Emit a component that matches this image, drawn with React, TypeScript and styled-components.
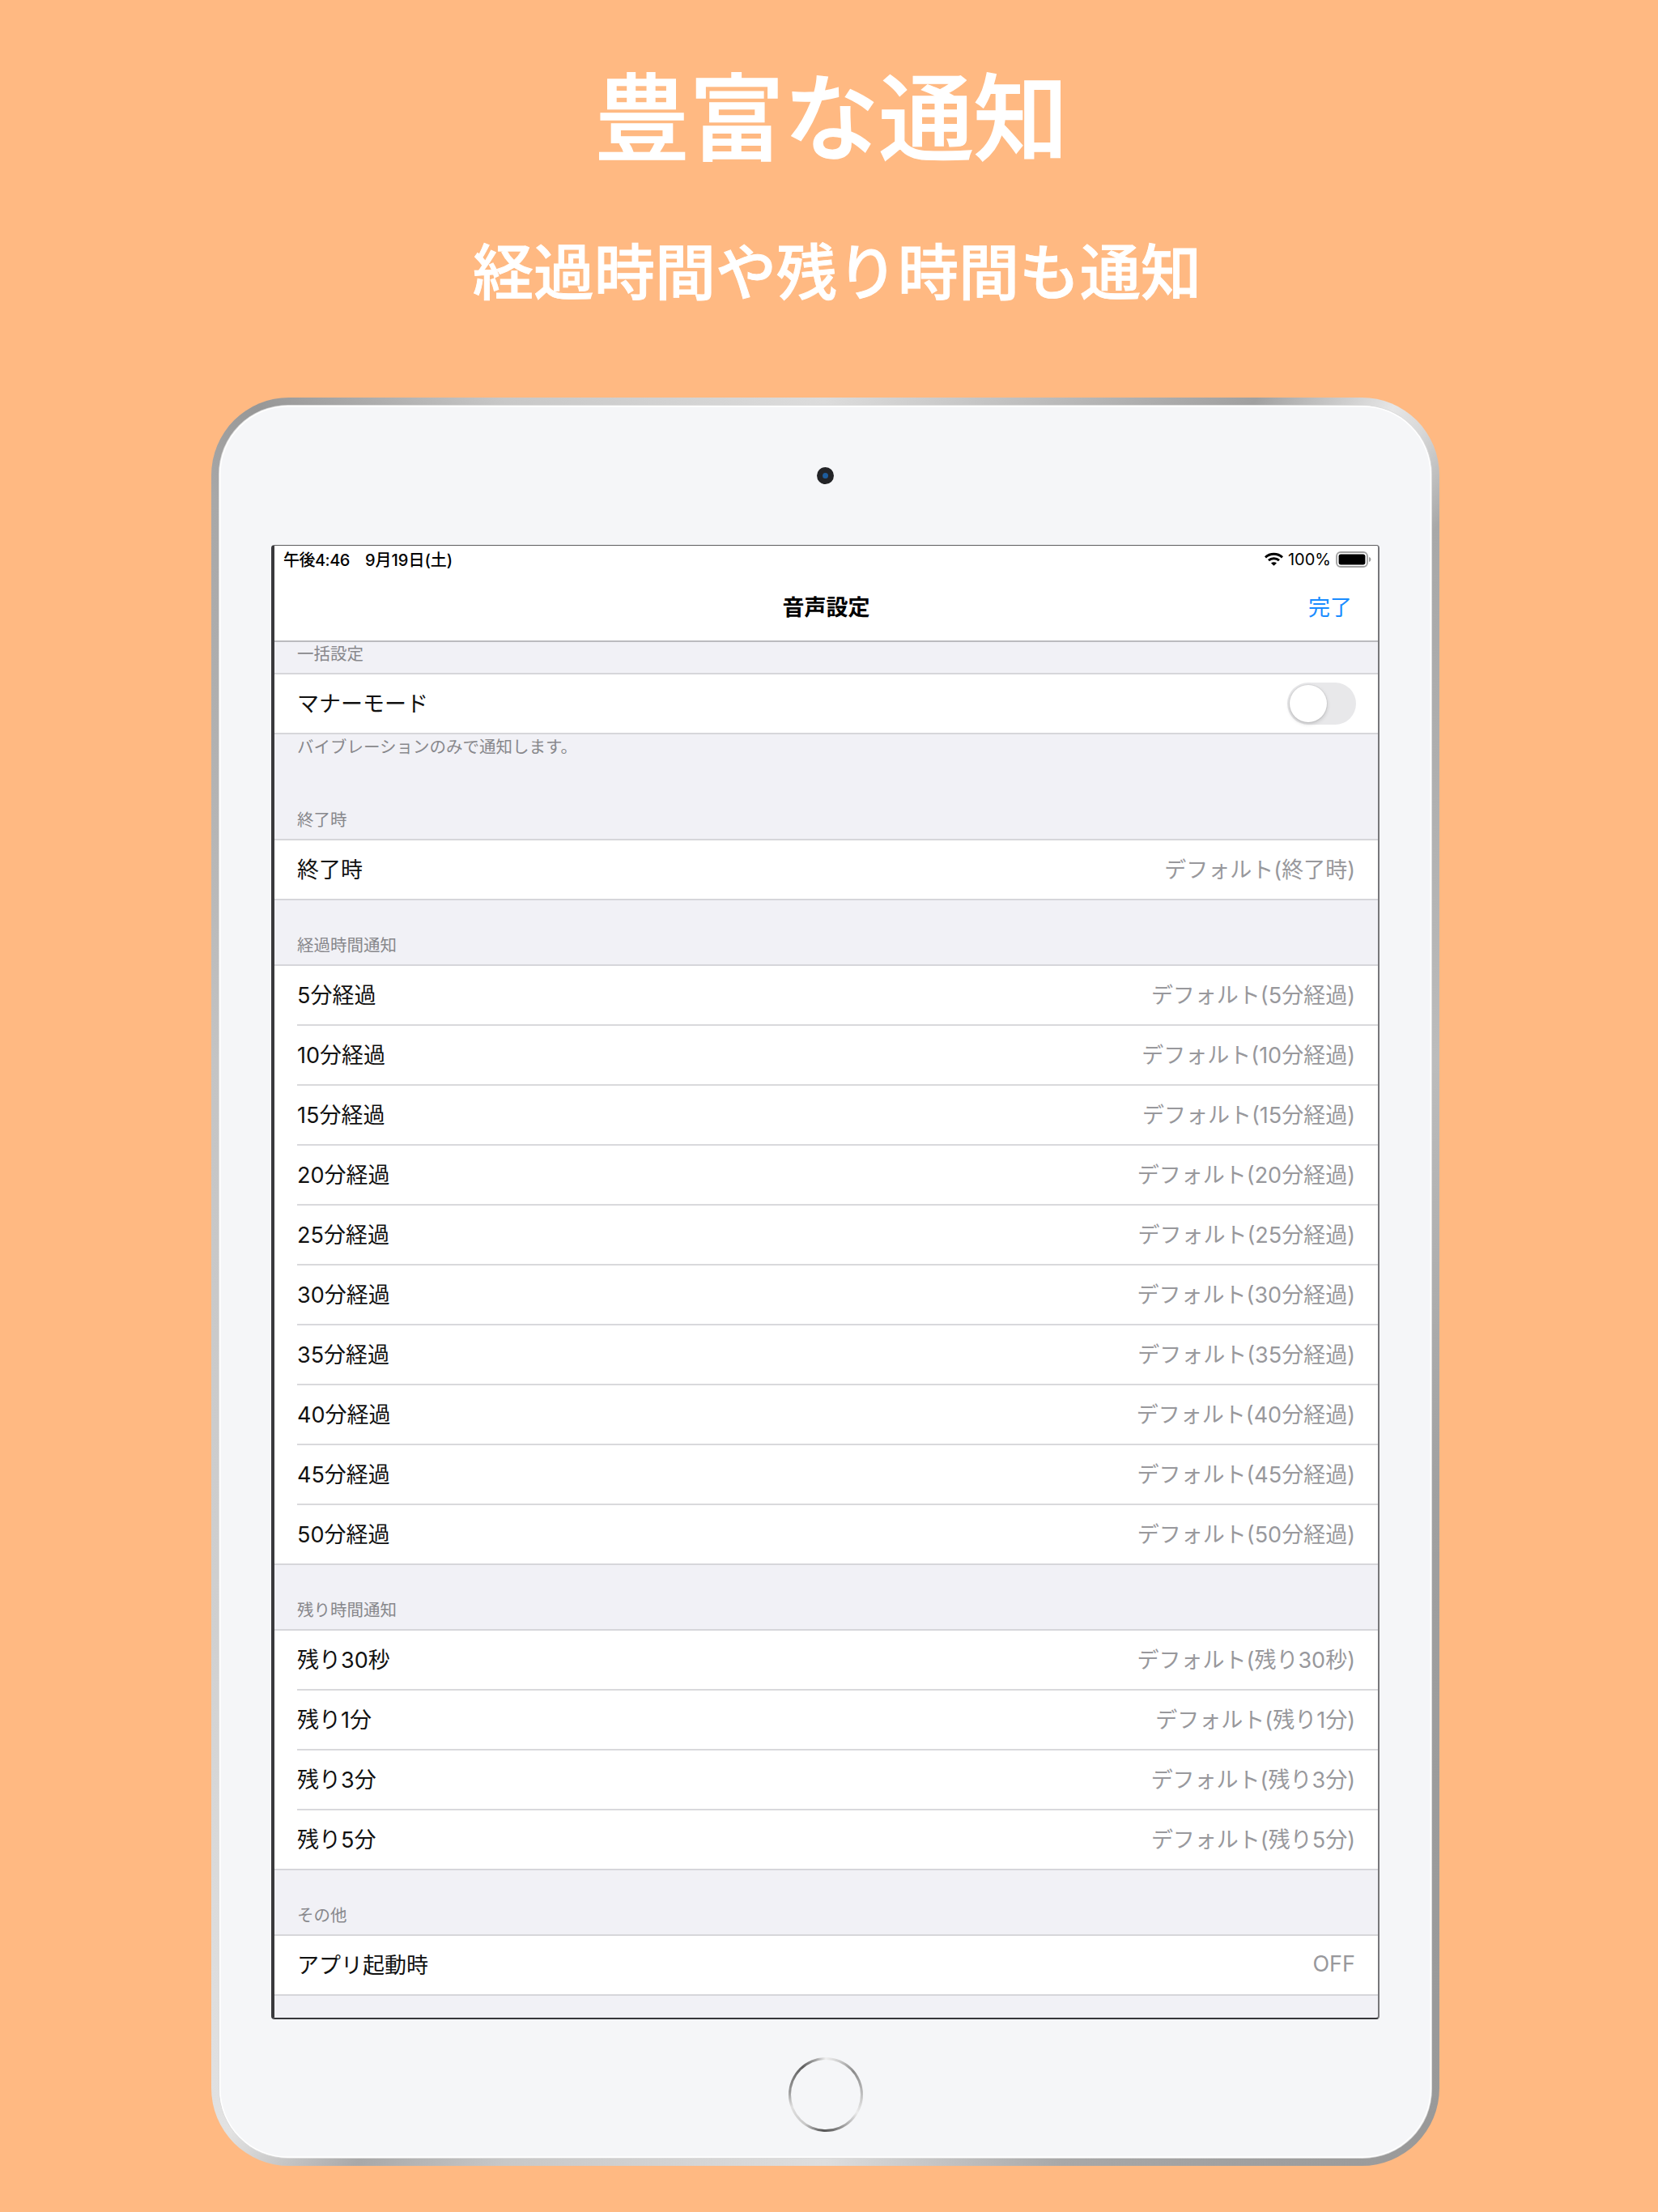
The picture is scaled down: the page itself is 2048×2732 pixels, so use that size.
import React from "react";
import styled, { createGlobalStyle } from "styled-components";

const GlobalStyle = createGlobalStyle`
  html, body {
    margin: 0;
    padding: 0;
    background: #ffb982;
  }
  * {
    box-sizing: border-box;
  }
`;

const JP = `Inter, "Noto Sans CJK JP", sans-serif`;

const Page = styled.div`
  width: 2048px;
  height: 2732px;
  padding: 88px 0 0 261px;
  background: #ffb982;
  font-family: ${JP};
  overflow: hidden;
`;

const Headline = styled.h1`
  width: 1532px;
  margin: 0;
  color: #fff;
  font-size: 117px;
  line-height: 117px;
  font-weight: 500;
  -webkit-text-stroke: 1.4px #fff;
  text-align: center;
`;

const SubHeadline = styled.h2`
  width: 1546px;
  margin: 94px 0 0;
  color: #fff;
  font-size: 75px;
  line-height: 75px;
  font-weight: 500;
  -webkit-text-stroke: 0.9px #fff;
  text-align: center;
`;

const DeviceBody = styled.div`
  width: 1517px;
  height: 2184px;
  margin-top: 117px;
  padding: 10px;
  border-radius: 96px;
  background: conic-gradient(
    from 0deg at 50% 50%,
    #dcdcdc 0deg,
    #a0a0a0 26deg,
    #e6e6e6 33deg,
    #d8d8d8 35deg,
    #a8a8a8 39deg,
    #bcbcbc 70deg,
    #a0a0a0 110deg,
    #999 145deg,
    #a8a8a8 165deg,
    #dedede 180deg,
    #c8c8c8 200deg,
    #a8a8a8 208deg,
    #e2e2e2 215deg,
    #d0d0d0 240deg,
    #c4c4c4 290deg,
    #a8a8a8 322deg,
    #979797 327deg,
    #c8c8c8 340deg,
    #dcdcdc 360deg
  );
`;

const DeviceFace = styled.div`
  height: 100%;
  padding-top: 76px;
  border-radius: 85px;
  background: #f5f6f8;
  box-shadow: inset 0 0 0 1.5px #fff, 0 0 0 1px #dcdcdc;
  display: flex;
  flex-direction: column;
  align-items: center;
`;

const Camera = styled.div`
  width: 21px;
  height: 21px;
  flex: none;
  margin-bottom: 75px;
  border-radius: 50%;
  background: #232427;
  display: flex;
  align-items: center;
  justify-content: center;

  &::after {
    content: "";
    width: 7px;
    height: 7px;
    border-radius: 50%;
    background: #1d5c9c;
  }
`;

const Screen = styled.div`
  width: 1369px;
  height: 1821px;
  flex: none;
  border-style: solid;
  border-width: 1px 2px 2px 4px;
  border-color: #5c5c5e #77777a #36363a #3a3a3d;
  border-radius: 4px;
  background: #f1f1f6;
  overflow: hidden;
`;

const StatusBar = styled.div`
  height: 39px;
  padding: 0 8px 6px 11px;
  background: #fff;
  display: flex;
  align-items: center;
  justify-content: space-between;
  color: #000;
  font-size: 20px;
  font-weight: 500;
`;

const StatusGroup = styled.div`
  display: flex;
  align-items: center;
  gap: 6px;
`;

const Clock = styled.span`
  margin-right: 13px;
  letter-spacing: -0.5px;
`;

const BatteryText = styled.span`
  font-weight: 400;
`;

const NavBar = styled.div`
  height: 80px;
  padding: 0 32px 7px;
  background: #fff;
  border-bottom: 2px solid #bbbbbf;
  display: grid;
  grid-template-columns: 1fr auto 1fr;
  align-items: center;
`;

const NavTitle = styled.div`
  color: #000;
  font-size: 27px;
  font-weight: 700;
`;

const DoneButton = styled.div`
  justify-self: end;
  color: #1a8cff;
  font-size: 27px;
`;

const SectionHeader = styled.div<{ $height: number }>`
  height: ${(p) => p.$height}px;
  padding: 0 28px 8px;
  display: flex;
  align-items: flex-end;
  color: #88888c;
  font-size: 20.5px;
  line-height: 30px;
`;

const SectionFooter = styled.div`
  height: 50px;
  padding: 1px 28px 0;
  color: #88888c;
  font-size: 20.5px;
  line-height: 30px;
`;

const Group = styled.div`
  background: #fff;
  border-top: 2px solid #d6d6da;
  border-bottom: 2px solid #d6d6da;
`;

const Row = styled.div`
  height: 74px;
  margin-left: 28px;
  padding: 0 28px 3px 0;
  border-bottom: 2px solid #d9d9dc;
  display: flex;
  align-items: center;
  justify-content: space-between;

  &:last-child {
    height: 72px;
    border-bottom: none;
  }
`;

const RowLabel = styled.span`
  color: #111;
  font-size: 27px;
`;

const RowValue = styled.span`
  color: #98989c;
  font-size: 27px;
`;

const Toggle = styled.div`
  width: 85px;
  height: 52px;
  margin: 0 -1px -3px 0;
  padding: 3px;
  border-radius: 26px;
  background: #e8e8ea;
`;

const ToggleKnob = styled.div`
  width: 46px;
  height: 46px;
  border-radius: 50%;
  background: #fff;
  box-shadow: 0 2px 5px rgba(0, 0, 0, 0.18), 0 0 0 1px rgba(0, 0, 0, 0.05);
`;

const HomeButton = styled.div`
  width: 92px;
  height: 92px;
  flex: none;
  margin-top: 47px;
  padding: 3px;
  border-radius: 50%;
  background: conic-gradient(
    #f0f0f0 0deg,
    #d0d0d0 20deg,
    #8a8a8a 50deg,
    #c0c0c0 90deg,
    #ececec 120deg,
    #6e6e6e 170deg,
    #555 185deg,
    #c8c8c8 215deg,
    #e0e0e0 250deg,
    #999 275deg,
    #5e5e5e 320deg,
    #a8a8a8 345deg,
    #f0f0f0 360deg
  );
`;

const HomeFace = styled.div`
  width: 100%;
  height: 100%;
  border-radius: 50%;
  background: #f5f6f8;
`;

const WifiIcon = () => (
  <svg width="23" height="17" viewBox="0 0 23 17" fill="none" stroke="#000">
    <path d="M1 6.4C7 1 16 1 22 6.4" strokeWidth="3" />
    <path d="M5 10.2C8.6 7 14.4 7 18 10.2" strokeWidth="3" />
    <path d="M11.5 16.8L8 13.5C10 11.8 13 11.8 15 13.5Z" fill="#000" stroke="none" />
  </svg>
);

const BatteryIcon = () => (
  <svg width="44" height="20" viewBox="0 0 44 20">
    <rect x="1" y="1" width="38" height="18" rx="5" fill="none" stroke="#a0a0a0" strokeWidth="1.8" />
    <rect x="3.6" y="3.6" width="32.8" height="12.8" rx="2.6" fill="#000" />
    <path d="M41 7C42.6 7.4 43.4 8.6 43.4 10C43.4 11.4 42.6 12.6 41 13Z" fill="#a0a0a0" />
  </svg>
);

type Item = { label: string; value: string };

const elapsed: Item[] = [5, 10, 15, 20, 25, 30, 35, 40, 45, 50].map((m) => ({
  label: `${m}分経過`,
  value: `デフォルト(${m}分経過)`,
}));

const remaining: Item[] = ["30秒", "1分", "3分", "5分"].map((t) => ({
  label: `残り${t}`,
  value: `デフォルト(残り${t})`,
}));

const ItemGroup = ({ items }: { items: Item[] }) => (
  <Group>
    {items.map((item) => (
      <Row key={item.label}>
        <RowLabel>{item.label}</RowLabel>
        <RowValue>{item.value}</RowValue>
      </Row>
    ))}
  </Group>
);

const App = () => {
  return (
    <Page>
      <GlobalStyle />
      <Headline>豊富な通知</Headline>
      <SubHeadline>経過時間や残り時間も通知</SubHeadline>
      <DeviceBody>
        <DeviceFace>
          <Camera />
          <Screen>
            <StatusBar>
              <StatusGroup>
                <Clock>午後4:46</Clock>
                <span>9月19日(土)</span>
              </StatusGroup>
              <StatusGroup>
                <WifiIcon />
                <BatteryText>100%</BatteryText>
                <BatteryIcon />
              </StatusGroup>
            </StatusBar>
            <NavBar>
              <span />
              <NavTitle>音声設定</NavTitle>
              <DoneButton>完了</DoneButton>
            </NavBar>
            <SectionHeader $height={38}>一括設定</SectionHeader>
            <Group>
              <Row>
                <RowLabel>マナーモード</RowLabel>
                <Toggle>
                  <ToggleKnob />
                </Toggle>
              </Row>
            </Group>
            <SectionFooter>バイブレーションのみで通知します。</SectionFooter>
            <SectionHeader $height={79}>終了時</SectionHeader>
            <ItemGroup items={[{ label: "終了時", value: "デフォルト(終了時)" }]} />
            <SectionHeader $height={79}>経過時間通知</SectionHeader>
            <ItemGroup items={elapsed} />
            <SectionHeader $height={79}>残り時間通知</SectionHeader>
            <ItemGroup items={remaining} />
            <SectionHeader $height={79}>その他</SectionHeader>
            <ItemGroup items={[{ label: "アプリ起動時", value: "OFF" }]} />
          </Screen>
          <HomeButton>
            <HomeFace />
          </HomeButton>
        </DeviceFace>
      </DeviceBody>
    </Page>
  );
};

export default App;
